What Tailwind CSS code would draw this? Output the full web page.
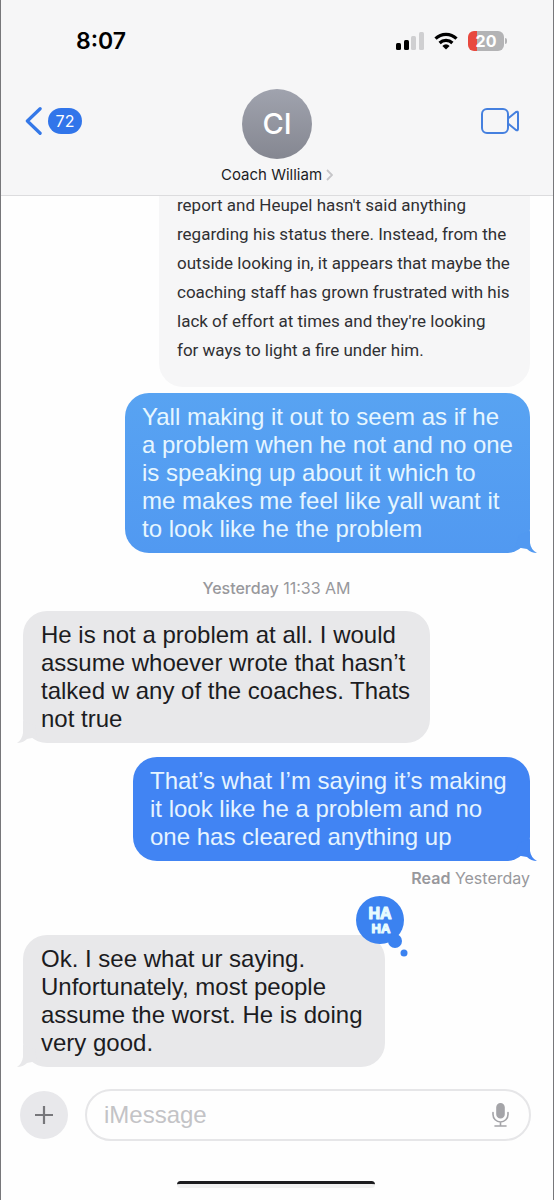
<!DOCTYPE html>
<html lang="en">
<head>
  <meta charset="UTF-8">
  <meta name="viewport" content="width=device-width, initial-scale=1.0">
  <title>Coach William</title>
  <script src="https://cdn.jsdelivr.net/npm/@tailwindcss/browser@4"></script>
</head>
<body class="h-screen flex flex-col overflow-hidden bg-[#fefefe] border-x border-[#77777a] font-['Inter','Liberation_Sans',sans-serif] text-[#1c1c1f]">
  <!-- Header -->
  <header class="shrink-0 bg-[#f6f6f7] border-b border-[#dcdcde]">
    <div class="flex items-center justify-between h-[82px] pl-[75px] pr-[46px]">
      <span class="text-[23px] font-semibold text-black">8:07</span>
      <div class="flex items-center gap-[10px]">
        <svg class="w-7 h-[18px]" viewBox="0 0 28 18">
          <rect x="0" y="11" width="5" height="7" rx="1.5" fill="#000" />
          <rect x="8" y="8" width="5" height="10" rx="1.5" fill="#000" />
          <rect x="15" y="4" width="5" height="14" rx="1.5" fill="#cfcfd1" />
          <rect x="23" y="0" width="5" height="18" rx="1.5" fill="#cfcfd1" />
        </svg>
        <svg class="w-6 h-[18px]" viewBox="0 0 24 18" fill="none" stroke="#000" stroke-width="3.2">
          <path d="M1.5 6.6a15 15 0 0 1 21 0" />
          <path d="M5.6 11a9.2 9.2 0 0 1 12.8 0" />
          <path d="M12 17.6l-3.6-3.7a5 5 0 0 1 7.2 0z" fill="#000" stroke="none" />
        </svg>
        <div class="flex items-center gap-px">
          <div class="flex items-center justify-center w-9 h-5 rounded-md bg-linear-to-r from-[#e8493f] from-25% to-[#b3b3b5] to-25% text-white text-base font-bold">20</div>
          <div class="w-[2px] h-[6px] rounded-r bg-[#b3b3b5]"></div>
        </div>
      </div>
    </div>
    <div class="grid grid-cols-3 h-[113px] px-6">
      <a href="#" class="flex items-center gap-[6px] self-start h-[78px]" aria-label="Back, 72 unread">
        <svg class="w-[17px] h-[30px]" viewBox="0 0 18 30" fill="none" stroke="#3478e8" stroke-width="3.4" stroke-linecap="round" stroke-linejoin="round">
          <path d="M16 2L2.5 15 16 28" />
        </svg>
        <span class="flex items-center justify-center w-[34px] h-[26px] rounded-full bg-[#3175ea] text-white text-base">72</span>
      </a>
      <div class="flex flex-col items-center pt-[7px]">
        <div class="flex items-center justify-center w-[70px] h-[70px] rounded-full bg-linear-to-b from-[#a0a3ae] to-[#858791] text-white text-[29px] font-medium">CI</div>
        <button type="button" class="flex items-center gap-1 mt-[6px] text-[15px] leading-5 whitespace-nowrap">
          Coach William
          <svg class="w-[7px] h-3" viewBox="0 0 7 12" fill="none" stroke="#c5c5c8" stroke-width="1.8"><path d="M1 1l5 5-5 5" /></svg>
        </button>
      </div>
      <button type="button" class="flex items-center justify-end self-start h-[78px] pr-[10px]" aria-label="Video call">
        <svg class="w-[38px] h-[26px]" viewBox="0 0 38 26" fill="none" stroke="#4580df" stroke-width="2" stroke-linejoin="round">
          <rect x="1" y="1" width="26" height="24" rx="5" />
          <path d="M27 10.5L35 4q2-1 2 1v16q0 2-2 1L27 15.5" />
        </svg>
      </button>
    </div>
  </header>

  <!-- Conversation, anchored to the newest message -->
  <main class="flex-1 min-h-0 flex flex-col justify-end overflow-hidden pl-[22px] pr-[23px] font-['Liberation_Sans',sans-serif] text-2xl leading-7">
    <div class="self-end shrink-0 w-[371px] px-[18px] pt-10 pb-[22px] rounded-3xl bg-[#f6f6f7] font-[Roboto,sans-serif] text-[17px] leading-[29px] whitespace-nowrap text-[#303033]">
      report and Heupel hasn't said anything<br>
      regarding his status there. Instead, from the<br>
      outside looking in, it appears that maybe the<br>
      coaching staff has grown frustrated with his<br>
      lack of effort at times and they're looking<br>
      for ways to light a fire under him.
    </div>

    <div class="relative self-end shrink-0 mt-[6px] w-[405px] px-[17px] py-[10px] rounded-3xl bg-linear-to-b from-[#58a3f2] to-[#5199f1] text-[#e6f6ff] whitespace-nowrap">
      Yall making it out to seem as if he<br>
      a problem when he not and no one<br>
      is speaking up about it which to<br>
      me makes me feel like yall want it<br>
      to look like he the problem
      <svg class="absolute -right-[7px] bottom-0 w-6 h-6" viewBox="0 0 24 24" fill="#5199f1"><path d="M17 2v12q1 7 7 10-6 0-10-4L2 18 6 6z" /></svg>
    </div>

    <p class="shrink-0 mt-[25px] mb-[13px] text-center font-['Inter',sans-serif] text-base leading-5 text-[#98989c]"><span class="font-medium">Yesterday</span> 11:33 AM</p>

    <div class="relative self-start shrink-0 w-[407px] px-[18px] py-[10px] rounded-3xl bg-[#e8e8ea] whitespace-nowrap">
      He is not a problem at all. I would<br>
      assume whoever wrote that hasn’t<br>
      talked w any of the coaches. Thats<br>
      not true
      <svg class="absolute -left-[6px] bottom-0 w-6 h-6" viewBox="0 0 24 24" fill="#e8e8ea"><path d="M6 2v12q-1 7-6 10 6 0 10-4l10-2L18 6z" /></svg>
    </div>

    <div class="relative self-end shrink-0 mt-[14px] w-[397px] px-[17px] py-[10px] rounded-3xl bg-[#4184f3] text-[#e6f4ff] whitespace-nowrap">
      That’s what I’m saying it’s making<br>
      it look like he a problem and no<br>
      one has cleared anything up
      <svg class="absolute -right-[7px] bottom-0 w-6 h-6" viewBox="0 0 24 24" fill="#4184f3"><path d="M17 2v12q1 7 7 10-6 0-10-4L2 18 6 6z" /></svg>
    </div>
    <p class="shrink-0 mt-[7px] text-right font-['Inter',sans-serif] text-base leading-5 text-[#98989c]"><span class="font-semibold">Read</span> Yesterday</p>

    <div class="relative self-start shrink-0 mt-[47px] mb-[22px] w-[362px] px-[18px] py-[10px] rounded-3xl bg-[#e8e8ea] whitespace-nowrap">
      Ok. I see what ur saying.<br>
      Unfortunately, most people<br>
      assume the worst. He is doing<br>
      very good.
      <svg class="absolute -left-[6px] bottom-0 w-6 h-6" viewBox="0 0 24 24" fill="#e8e8ea"><path d="M6 2v12q-1 7-6 10 6 0 10-4l10-2L18 6z" /></svg>
      <!-- Reaction -->
      <svg class="absolute -right-6 -top-10 w-[54px] h-[62px]" viewBox="0 0 54 62" role="img" aria-label="Ha ha">
        <g fill="#3b82f0">
          <circle cx="25" cy="25" r="24" />
          <circle cx="40" cy="46" r="7" />
          <circle cx="49" cy="58" r="3.5" />
        </g>
        <g fill="#e6fbff" stroke="#e6fbff" stroke-width="1.2" stroke-linejoin="round" font-family="Liberation Sans, sans-serif" font-weight="700" text-anchor="middle">
          <text x="25" y="24" font-size="16">HA</text>
          <text x="26" y="38" font-size="13">HA</text>
        </g>
      </svg>
    </div>
  </main>

  <!-- Composer -->
  <footer class="shrink-0 pl-[19px] pr-[22px] pb-3">
    <form class="flex items-center gap-[17px]">
      <button type="button" class="flex items-center justify-center shrink-0 w-12 h-12 rounded-full bg-[#e8e8eb]" aria-label="Add attachment">
        <svg class="w-[18px] h-[18px]" viewBox="0 0 18 18" stroke="#77777b" stroke-width="2.2"><path d="M9 0v18M0 9h18" /></svg>
      </button>
      <div class="flex flex-1 min-w-0 items-center h-[52px] pl-[17px] pr-[20px] rounded-full border-2 border-[#e6e6e8]">
        <input type="text" placeholder="iMessage" aria-label="iMessage" class="flex-1 min-w-0 font-['Liberation_Sans',sans-serif] text-2xl leading-7 outline-none placeholder:text-[#c3c3c6]">
        <button type="button" aria-label="Dictate">
          <svg class="block w-[17px] h-6" viewBox="0 0 17 24" fill="none" stroke="#a4a4a8" stroke-width="1.6" stroke-linecap="round">
            <rect x="5" y="0.8" width="7" height="14" rx="3.5" fill="#a4a4a8" />
            <path d="M1 9.5v2a7.5 7.5 0 0 0 15 0v-2M8.5 19v4M3 23h11" />
          </svg>
        </button>
      </div>
    </form>
    <div class="mx-auto mt-10 w-[198px] h-[7px] rounded-full border-t-[3px] border-[#1c1c1f] bg-[#f1f1f1]"></div>
  </footer>
</body>
</html>
